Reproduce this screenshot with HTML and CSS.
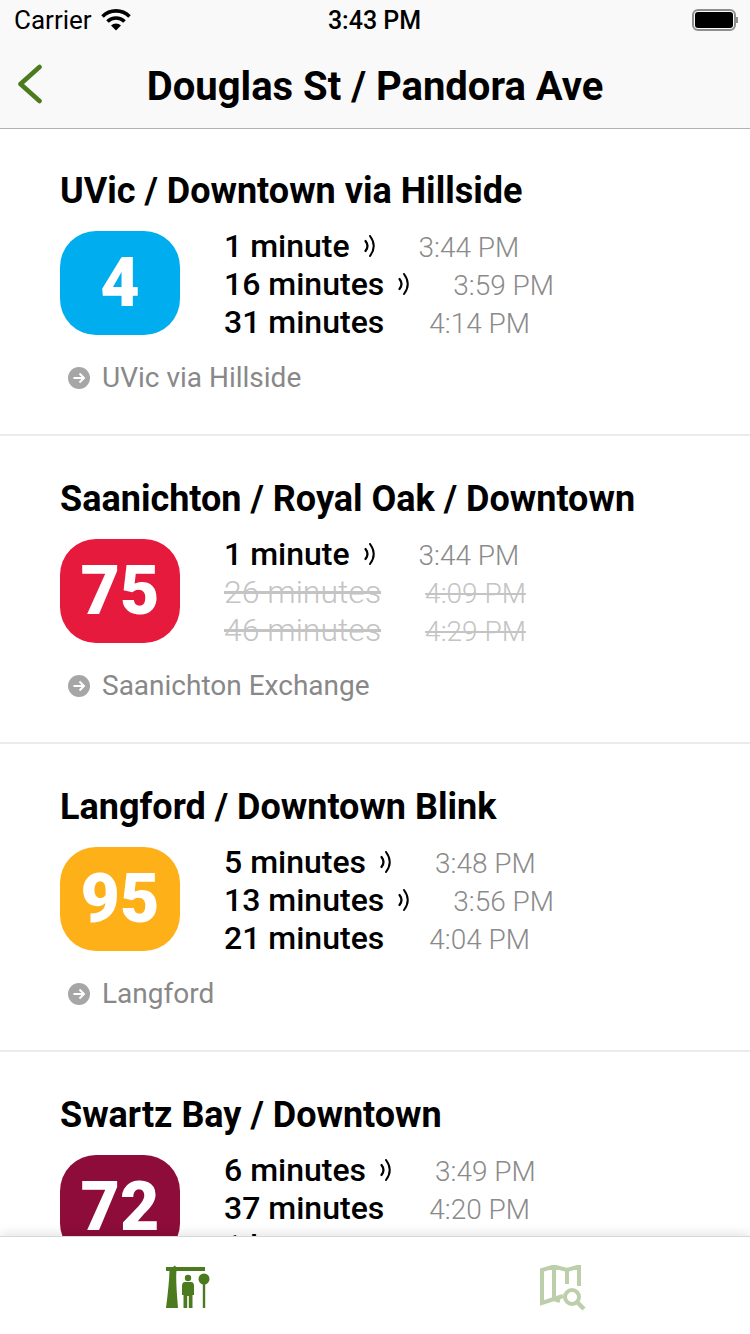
FILE: index.html
```html
<!DOCTYPE html>
<html>
<head>
<title>Douglas St / Pandora Ave</title>
<link rel="stylesheet" href="styles.css">
</head>
<body>

<svg class="defs">
  <symbol id="wave" viewBox="0 0 12 22">
    <path d="M1.5 6 Q5.5 11 1.5 16" fill="none" stroke="#000" stroke-width="2.2" stroke-linecap="round"/>
    <path d="M6 1 Q13.5 11 6 21" fill="none" stroke="#000" stroke-width="2" stroke-linecap="round"/>
  </symbol>
  <symbol id="go" viewBox="0 0 22 22">
    <circle cx="11" cy="11" r="11" fill="#a6a6a6"/>
    <path d="M5.5 11 H15.5 M11.5 6.5 L16 11 L11.5 15.5" fill="none" stroke="#fff" stroke-width="2"/>
  </symbol>
</svg>

<div class="screen">
  <div class="top">
    <div class="status">
      <div class="status-left">
        <span class="carrier">Carrier</span>
        <svg class="wifi" width="30" height="22" viewBox="0 0 30 22">
          <path d="M1.5 7.5 A19 19 0 0 1 28.5 7.5" fill="none" stroke="#000" stroke-width="3.6"/>
          <path d="M6.5 12.5 A12 12 0 0 1 23.5 12.5" fill="none" stroke="#000" stroke-width="3.6"/>
          <path d="M10 16.5 A7 7 0 0 1 20 16.5 L15 21.5 Z" fill="#000"/>
        </svg>
      </div>
      <div class="clock">3:43 PM</div>
      <div class="battery-wrap">
        <div class="battery"><div class="charge"></div></div>
        <div class="nub"></div>
      </div>
    </div>
    <div class="nav">
      <svg class="back" width="26" height="40" viewBox="0 0 26 40">
        <path d="M23.5 3 L4.5 20 L23.5 37" fill="none" stroke="#4c7a1e" stroke-width="4.6" stroke-linecap="round" stroke-linejoin="round"/>
      </svg>
      <h1>Douglas St / Pandora Ave</h1>
    </div>
  </div>

  <div class="list">
    <div class="route">
      <h2>UVic / Downtown via Hillside</h2>
      <div class="route-body">
        <div class="badge blue">4</div>
        <div class="times">
          <div class="row"><span class="mins">1 minute</span><svg class="wave"><use href="#wave"/></svg><span class="clocktime">3:44 PM</span></div>
          <div class="row"><span class="mins">16 minutes</span><svg class="wave"><use href="#wave"/></svg><span class="clocktime">3:59 PM</span></div>
          <div class="row"><span class="mins">31 minutes</span><span class="clocktime">4:14 PM</span></div>
        </div>
      </div>
      <div class="dest"><svg class="go"><use href="#go"/></svg>UVic via Hillside</div>
    </div>

    <div class="route">
      <h2>Saanichton / Royal Oak / Downtown</h2>
      <div class="route-body">
        <div class="badge red">75</div>
        <div class="times">
          <div class="row"><span class="mins">1 minute</span><svg class="wave"><use href="#wave"/></svg><span class="clocktime">3:44 PM</span></div>
          <div class="row cancelled"><span class="mins">26 minutes</span><span class="clocktime">4:09 PM</span></div>
          <div class="row cancelled"><span class="mins">46 minutes</span><span class="clocktime">4:29 PM</span></div>
        </div>
      </div>
      <div class="dest"><svg class="go"><use href="#go"/></svg>Saanichton Exchange</div>
    </div>

    <div class="route">
      <h2>Langford / Downtown Blink</h2>
      <div class="route-body">
        <div class="badge amber">95</div>
        <div class="times">
          <div class="row"><span class="mins">5 minutes</span><svg class="wave"><use href="#wave"/></svg><span class="clocktime">3:48 PM</span></div>
          <div class="row"><span class="mins">13 minutes</span><svg class="wave"><use href="#wave"/></svg><span class="clocktime">3:56 PM</span></div>
          <div class="row"><span class="mins">21 minutes</span><span class="clocktime">4:04 PM</span></div>
        </div>
      </div>
      <div class="dest"><svg class="go"><use href="#go"/></svg>Langford</div>
    </div>

    <div class="route">
      <h2>Swartz Bay / Downtown</h2>
      <div class="route-body">
        <div class="badge maroon">72</div>
        <div class="times">
          <div class="row"><span class="mins">6 minutes</span><svg class="wave"><use href="#wave"/></svg><span class="clocktime">3:49 PM</span></div>
          <div class="row"><span class="mins">37 minutes</span><span class="clocktime">4:20 PM</span></div>
          <div class="row"><span class="mins">1 hour</span></div>
        </div>
      </div>
    </div>
  </div>

  <div class="tabs">
    <div class="tab">
      <svg width="46" height="44" viewBox="0 0 46 44">
        <path d="M1 2 H8 L10 0.5 L11 2 H40 V6 H11.5 Q10.5 14 13 43 H1 Q4 20 4.5 6 H1 Z" fill="#4c7a1e"/>
        <circle cx="23" cy="13" r="3.2" fill="#4c7a1e"/>
        <path d="M17 21 Q17 17 20 17 H26 Q29 17 29 21 V30 H27.5 V43 H23.8 V31 H22.2 V43 H18.5 V30 H17 Z" fill="#4c7a1e"/>
        <circle cx="39" cy="14" r="5.5" fill="#4c7a1e"/>
        <rect x="37.8" y="15" width="2.4" height="28" fill="#4c7a1e"/>
      </svg>
    </div>
    <div class="tab">
      <svg width="46" height="46" viewBox="0 0 46 46">
        <path d="M23 31 L14 34 L2 38 V5 L14 1.5 L27 5 L39 1.5 V21 M14 1.5 V34 M27 5 V19 M14 34 L20 36" fill="none" stroke="#bccfaa" stroke-width="4"/>
        <circle cx="32" cy="32" r="7" fill="none" stroke="#bccfaa" stroke-width="4"/>
        <path d="M37 37 L44 44" fill="none" stroke="#bccfaa" stroke-width="4.4"/>
      </svg>
    </div>
  </div>
</div>

</body>
</html>
```

FILE: styles.css
```css
body {
  margin: 0;
  font-family: "Roboto", sans-serif;
  color: #000;
  background-color: #fff;
}

.defs {
  display: none;
}

.screen {
  width: 750px;
  height: 1334px;
  display: flex;
  flex-direction: column;
  overflow: hidden;
}

.top {
  background-color: #f9f9f9;
  border-bottom: 1px solid #b2b2b2;
  height: 128px;
}

.status {
  height: 40px;
  display: flex;
  align-items: center;
  justify-content: space-between;
  padding: 0 12px 0 14px;
}

.status-left {
  width: 197px;
  display: flex;
  align-items: center;
  gap: 9px;
}

.carrier {
  font-size: 26px;
}

.clock {
  font-size: 25px;
  font-weight: 500;
}

.battery-wrap {
  width: 200px;
  display: flex;
  align-items: center;
  justify-content: flex-end;
}

.battery {
  width: 38px;
  height: 16px;
  border: 2px solid #8e8e8e;
  border-radius: 6px;
  padding: 1px;
}

.charge {
  height: 100%;
  background-color: #000;
  border-radius: 3px;
}

.nub {
  width: 2px;
  height: 6px;
  background-color: #8e8e8e;
}

.nav {
  position: relative;
  height: 88px;
  display: flex;
  align-items: center;
  justify-content: center;
}

.back {
  position: absolute;
  left: 16px;
  top: 24px;
}

h1 {
  margin: 4px 0 0;
  font-size: 40px;
  font-weight: 700;
}

.list {
  flex: 1;
  min-height: 0;
  overflow: hidden;
  margin-top: -1px; /* first row starts under the nav border */
}

.route {
  height: 264px;
  border-bottom: 2px solid #ebebeb;
  padding: 42px 0 0 60px;
}

h2 {
  margin: 0;
  font-size: 36px;
  line-height: 42px;
  font-weight: 700;
}

.route-body {
  display: flex;
  align-items: flex-start;
  margin-top: 19px;
}

.badge {
  width: 120px;
  height: 104px;
  border-radius: 36px;
  color: #fff;
  font-size: 68px;
  font-weight: 900;
  display: flex;
  align-items: center;
  justify-content: center;
}

.blue { background-color: #00aeef; }
.red { background-color: #e51a3c; }
.amber { background-color: #fdb017; }
.maroon { background-color: #8d0c3a; }

.times {
  margin-left: 44px;
  margin-top: -4px;
}

.row {
  display: flex;
  align-items: center;
  height: 38px;
}

.mins {
  font-size: 32px;
  font-weight: 500;
}

.wave {
  width: 12px;
  height: 22px;
  margin-left: 14px;
}

.clocktime {
  font-size: 28px;
  font-weight: 300;
  color: #8a8a8a;
  margin: 2px 0 0 45px;
}

.wave + .clocktime {
  margin-left: 43px;
}

.cancelled .mins,
.cancelled .clocktime {
  font-weight: 300;
  color: #c4c4c4;
  text-decoration: line-through;
}

.cancelled .clocktime {
  margin-left: 44px;
}

.dest {
  display: flex;
  align-items: center;
  margin: 20px 0 0 8px;
  font-size: 28px;
  color: #888;
}

.go {
  width: 22px;
  height: 22px;
  margin-right: 12px;
}

.tabs {
  position: relative;
  height: 98px;
  flex-shrink: 0;
  display: flex;
  background-color: #fff;
  border-top: 1px solid #d8d8d8;
  box-sizing: border-box;
  box-shadow: 0 -3px 10px rgba(0, 0, 0, 0.1);
}

.tab {
  flex: 1;
  display: flex;
  justify-content: center;
  padding-top: 28px;
}
```
